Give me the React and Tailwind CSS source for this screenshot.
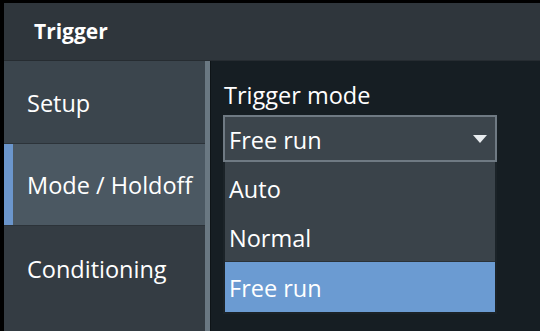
export default function App() {
  const font = { fontFamily: '"Open Sans", "Noto Sans", sans-serif' };
  return (
    <div className="w-[540px] h-[331px] bg-black pt-[3px] pl-[4px] overflow-hidden text-white" style={font}>
      <div className="flex flex-col h-full">
        <div className="h-[58px] bg-[#2f363c] flex items-center pl-[30px] border-b border-[#262c31]">
          <span className="text-[21px] font-bold leading-none">Trigger</span>
        </div>
        <div className="flex flex-1">
          <div className="w-[201px] flex flex-col">
            <div className="h-[83px] bg-[#3b454d] flex items-center pl-[23px] pt-[4px] border-b border-[#2c3339]">
              <span className="text-[23.5px] leading-none">Setup</span>
            </div>
            <div className="h-[82px] bg-[#4b5862] flex items-center border-b border-[#2c3339]">
              <div className="w-[9px] h-full bg-[#6b96cc]" />
              <span className="text-[23.5px] leading-none pl-[14px] pt-[2px]">Mode / Holdoff</span>
            </div>
            <div className="flex-1 bg-[#343c43] flex items-start pl-[23px] pt-[32px]">
              <span className="text-[23.5px] leading-none">Conditioning</span>
            </div>
          </div>
          <div className="w-[5px] bg-[#6a7882]" />
          <div className="flex-1 bg-[#161e23] pl-[12px] pt-[21px] border-l border-[#0e1417]">
            <div className="text-[23.5px] leading-[26px] pl-[1px]">Trigger mode</div>
            <div className="mt-[7px] w-[274px]">
              <div className="h-[47px] bg-[#3c454c] border-[2px] border-[#6f7a83] flex items-center justify-between pl-[4px] pr-[8px]">
                <span className="text-[23.5px] leading-none pt-[5px]">Free run</span>
                <svg width="14" height="8" viewBox="0 0 14 8">
                  <path d="M0 0 L14 0 L7 8 Z" fill="#e8ecef" />
                </svg>
              </div>
              <div className="bg-[#3a434a] border-[2px] border-t-0 border-[#1b2328]">
                <div className="h-[50px] flex items-center pl-[4px] pt-[5px] text-[23.5px] leading-none">Auto</div>
                <div className="h-[50px] flex items-center pl-[4px] pt-[4px] text-[23.5px] leading-none border-b border-[#2a3238]">Normal</div>
                <div className="h-[50px] flex items-center pl-[4px] pt-[3px] text-[23.5px] leading-none bg-[#6b9bd2]">Free run</div>
              </div>
            </div>
          </div>
        </div>
      </div>
    </div>
  );
}
